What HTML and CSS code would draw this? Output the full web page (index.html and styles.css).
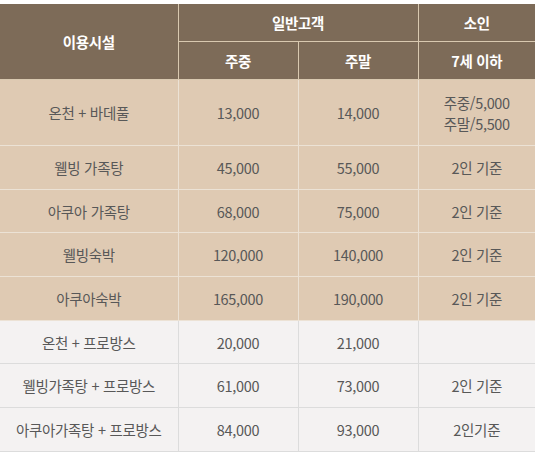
FILE: index.html
```html
<!DOCTYPE html>
<html lang="ko">
<head>
<meta charset="utf-8">
<link rel="stylesheet" href="styles.css">
</head>
<body>
<table class="price">
  <colgroup>
    <col class="c-name"><col class="c-num"><col class="c-num"><col class="c-kid">
  </colgroup>
  <thead>
    <tr class="h1">
      <th rowspan="2">이용시설</th>
      <th colspan="2">일반고객</th>
      <th>소인</th>
    </tr>
    <tr class="h2">
      <th>주중</th>
      <th>주말</th>
      <th>7세 이하</th>
    </tr>
  </thead>
  <tbody>
    <tr class="beige tall"><td>온천 + 바데풀</td><td>13,000</td><td>14,000</td><td>주중/5,000<br>주말/5,500</td></tr>
    <tr class="beige"><td>웰빙 가족탕</td><td>45,000</td><td>55,000</td><td>2인 기준</td></tr>
    <tr class="beige"><td>아쿠아 가족탕</td><td>68,000</td><td>75,000</td><td>2인 기준</td></tr>
    <tr class="beige"><td>웰빙숙박</td><td>120,000</td><td>140,000</td><td>2인 기준</td></tr>
    <tr class="beige"><td>아쿠아숙박</td><td>165,000</td><td>190,000</td><td>2인 기준</td></tr>
    <tr class="light"><td>온천 + 프로방스</td><td>20,000</td><td>21,000</td><td></td></tr>
    <tr class="light"><td>웰빙가족탕 + 프로방스</td><td>61,000</td><td>73,000</td><td>2인 기준</td></tr>
    <tr class="light"><td>아쿠아가족탕 + 프로방스</td><td>84,000</td><td>93,000</td><td>2인기준</td></tr>
  </tbody>
</table>
</body>
</html>
```
FILE: styles.css
```css
html, body {
  margin: 0;
  padding: 0;
  background: #ffffff;
}
body {
  padding-top: 4px;
  font-family: "Noto Sans CJK KR", "Noto Sans", sans-serif;
}
.price {
  width: 535px;
  border-collapse: collapse;
  table-layout: fixed;
  font-size: 14.5px;
  letter-spacing: -0.3px;
}
.c-name { width: 178px; }
.c-num { width: 120px; }
.c-kid { width: 117px; }

.price th {
  background: #7d6b58;
  color: #ffffff;
  font-weight: 700;
  height: 37px;
  padding: 0;
  text-align: center;
  vertical-align: middle;
  border: 1px solid #d9c9b0;
  border-top: 0;
}
.price tr > :first-child { border-left: 0; }
.price tr > :last-child { border-right: 0; }

.price td {
  height: 42.7px;
  padding: 0;
  text-align: center;
  vertical-align: middle;
  color: #585858;
  line-height: 21px;
}
.price tr.tall td { height: 65px; }

.beige td {
  background: #dfcab3;
  border: 1px solid #ece2d5;
}
.light td {
  background: #f4f2f2;
  border: 1px solid #dcdcdc;
}
.price thead + tbody tr:first-child td { border-top: 0; }
```
